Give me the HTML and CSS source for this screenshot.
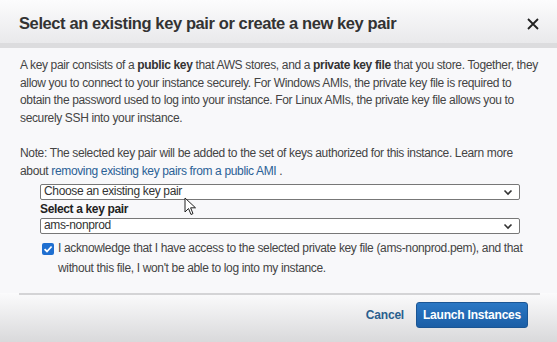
FILE: index.html
```html
<!DOCTYPE html>
<html lang="en">
  <head>
    <meta charset="UTF-8" />
    <meta name="viewport" content="width=device-width, initial-scale=1.0" />
    <title>Select key pair</title>
    <link rel="stylesheet" href="styles.css">
  </head>
  <body>
    <div class="modal">
      <div class="modal-header">
        <h2>Select an existing key pair or create a new key pair</h2>
        <span class="close">
          <svg width="12" height="12" viewBox="0 0 12 12">
            <path d="M1 1 L11 11 M11 1 L1 11" stroke="#222" stroke-width="1.8" />
          </svg>
        </span>
      </div>
      <div class="modal-body">
        <p>
          A key pair consists of a <b>public key</b> that AWS stores, and a <b>private key file</b> that you store. Together, they
          allow you to connect to your instance securely. For Windows AMIs, the private key file is required to
          obtain the password used to log into your instance. For Linux AMIs, the private key file allows you to
          securely SSH into your instance.
        </p>
        <p class="note">
          Note: The selected key pair will be added to the set of keys authorized for this instance. Learn more
          about <a href="#">removing existing key pairs from a public AMI</a> .
        </p>
        <div class="form-group">
          <div class="select">
            <span>Choose an existing key pair</span>
            <svg width="10" height="7" viewBox="0 0 10 7"><path d="M1.5 1.5 L5 5 L8.5 1.5" fill="none" stroke="#333" stroke-width="1.6" /></svg>
          </div>
          <label>Select a key pair</label>
          <div class="select">
            <span>ams-nonprod</span>
            <svg width="10" height="7" viewBox="0 0 10 7"><path d="M1.5 1.5 L5 5 L8.5 1.5" fill="none" stroke="#333" stroke-width="1.6" /></svg>
          </div>
          <svg class="cursor" width="13" height="19" viewBox="0 0 13 19">
            <path d="M1 1 L1 15 L4.5 11.5 L7 17.5 L9 16.6 L6.6 10.8 L11.5 10.8 Z" fill="#fff" stroke="#222" stroke-width="1" />
          </svg>
        </div>
        <div class="ack">
          <span class="checkbox">
            <svg width="12" height="12" viewBox="0 0 12 12"><path d="M2.6 6.1 L5 8.5 L9.6 3.5" fill="none" stroke="#fff" stroke-width="1.8" /></svg>
          </span>
          <span>I acknowledge that I have access to the selected private key file (ams-nonprod.pem), and that
          without this file, I won't be able to log into my instance.</span>
        </div>
      </div>
      <div class="modal-footer">
        <div class="footer-inner">
          <a href="#" class="cancel">Cancel</a>
          <button class="btn">Launch Instances</button>
        </div>
      </div>
    </div>
  </body>
</html>
```

FILE: styles.css
```css
body {
  margin: 0;
  font-family: "Liberation Sans", Arial, sans-serif;
  background-color: #f8f8fa;
}
.modal {
  width: 557px;
  height: 342px;
  display: flex;
  flex-direction: column;
  background-color: #f8f8fa;
  color: #444;
}
.modal-header {
  height: 43px;
  display: flex;
  align-items: center;
  justify-content: space-between;
  padding: 0 18px 0 19px;
  background: linear-gradient(#fcfcfd, #e9e9eb);
  border-bottom: 5px solid #dcdcde;
}
.modal-header h2 {
  margin: 4px 0 0;
  font-size: 16.5px;
  letter-spacing: -0.4px;
  color: #333;
}
.close {
  display: flex;
  margin-top: 4px;
}
.modal-body {
  flex: 1;
  padding: 9px 17px 0 20px;
  font-size: 12px;
  letter-spacing: -0.35px;
  line-height: 17.7px;
}
.modal-body p {
  margin: 0 0 17px;
}
.modal-body p.note {
  margin-bottom: 4px;
}
.modal-body b {
  color: #333;
}
.modal-body a {
  color: #2a6196;
  text-decoration: none;
}
.form-group {
  position: relative;
  margin: 0 0 0 20px;
  width: 480px;
}
.form-group label {
  display: block;
  font-weight: bold;
  color: #222;
  line-height: 18px;
}
.select {
  height: 14px;
  display: flex;
  align-items: center;
  justify-content: space-between;
  padding: 0 6px 0 3px;
  border: 1px solid #777;
  border-radius: 2px;
  background: #fff;
  color: #333;
}
.cursor {
  position: absolute;
  left: 144px;
  top: 13px;
}
.ack {
  display: flex;
  margin: 4px 0 0 22px;
  width: 500px;
  line-height: 20px;
}
.checkbox {
  flex: none;
  width: 12px;
  height: 12px;
  margin: 5px 4px 0 0;
  border-radius: 2px;
  background-color: #1f6fd0;
  display: flex;
}
.modal-footer {
  height: 49px;
  padding: 0 17px 0 19px;
  background: linear-gradient(#fbfbfc, #d9d9db);
}
.footer-inner {
  height: 39px;
  display: flex;
  align-items: center;
  justify-content: flex-end;
  gap: 12px;
  padding: 0 12px 8px 0;
  border-top: 2px solid #d4d4d6;
}
.cancel {
  font-size: 12px;
  letter-spacing: -0.2px;
  font-weight: bold;
  color: #2a5f8e;
  text-decoration: none;
}
.btn {
  height: 26px;
  width: 112px;
  padding: 0;
  font-family: inherit;
  font-size: 12px;
  letter-spacing: -0.2px;
  font-weight: bold;
  color: #fff;
  background: linear-gradient(#2a77c4, #1b5ea6);
  border: 1px solid #1a5594;
  border-radius: 3px;
}
```
